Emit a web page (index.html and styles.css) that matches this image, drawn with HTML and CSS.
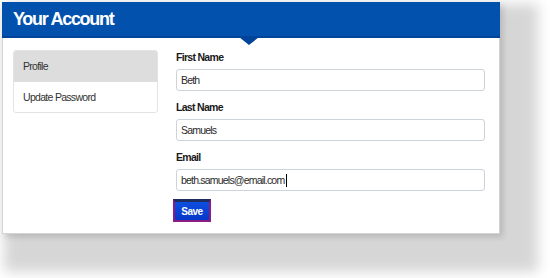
FILE: index.html
```html
<!DOCTYPE html>
<html lang="en">
<head>
    <meta charset="UTF-8">
    <meta name="viewport" content="width=device-width, initial-scale=1.0">
    <title>Your Account</title>
    <link rel="stylesheet" href="styles.css">
</head>
<body>
    <div class="account">
        <div class="account-header">
            <h1 class="title">Your Account</h1>
        </div>

        <div class="account-body">
            <ul class="side-nav">
                <li class="side-item active">Profile</li>
                <li class="side-item">Update Password</li>
            </ul>

            <form class="profile-form">
                <div class="form-group">
                    <label>First Name</label>
                    <div class="field">Beth</div>
                </div>

                <div class="form-group">
                    <label>Last Name</label>
                    <div class="field">Samuels</div>
                </div>

                <div class="form-group">
                    <label>Email</label>
                    <div class="field">beth.samuels@email.com<span class="caret"></span></div>
                </div>

                <button type="button" class="save-btn">Save</button>
            </form>
        </div>
    </div>
</body>
</html>
```

FILE: styles.css
```css
:root {
    --primary-color: #0251ad;
    --primary-dark: #00449a;
    --border-color: #d4d4d4;
    --text-color: #1c1c1c;
    --white: #ffffff;
}

* {
    margin: 0;
    padding: 0;
    box-sizing: border-box;
    font-family: "Liberation Sans", Arial, sans-serif;
}

body {
    background-color: var(--white);
    color: var(--text-color);
    min-height: 100vh;
    padding: 2px;
}

.account {
    width: 498px;
    height: 232px;
    background-color: var(--white);
    border: 1px solid var(--border-color);
    border-top: none;
    box-shadow: 3px 3px 6px rgba(0, 0, 0, 0.14), 20px 20px 12px 18px rgba(0, 0, 0, 0.16);
}

.account-header {
    position: relative;
    height: 36px;
    margin: 0 -1px;
    padding-left: 11px;
    background-color: var(--primary-color);
    border-bottom: 2px solid var(--primary-dark);
    display: flex;
    align-items: center;
}

/* little pointer under the header */
.account-header::after {
    content: "";
    position: absolute;
    left: 237px;
    bottom: -9px;
    border-left: 10px solid transparent;
    border-right: 10px solid transparent;
    border-top: 8px solid var(--primary-dark);
}

.title {
    color: var(--white);
    font-size: 18px;
    font-weight: bold;
    letter-spacing: -1.3px;
}

.account-body {
    display: flex;
    gap: 18px;
    padding: 12px 14px 0 10px;
}

.side-nav {
    list-style: none;
    width: 145px;
    align-self: flex-start;
    border: 1px solid #e3e3e3;
    border-radius: 3px;
    overflow: hidden;
}

.side-item {
    height: 30px;
    line-height: 30px;
    padding-left: 9px;
    font-size: 10.5px;
    letter-spacing: -0.7px;
    color: #333;
}

.side-item.active {
    background-color: #dddddd;
    height: 31px;
}

.profile-form {
    flex: 1;
    display: flex;
    flex-direction: column;
}

.form-group {
    margin-bottom: 9px;
}

label {
    display: block;
    height: 14px;
    line-height: 14px;
    margin-bottom: 5px;
    font-size: 10.5px;
    font-weight: bold;
    letter-spacing: -0.7px;
    color: #1a1a1a;
}

.field {
    height: 22px;
    line-height: 20px;
    padding-left: 4px;
    border: 1px solid #ccd3db;
    border-radius: 3px;
    font-size: 10.5px;
    letter-spacing: -0.8px;
    color: #2a2a2a;
    background-color: var(--white);
}

.caret {
    display: inline-block;
    width: 1px;
    height: 13px;
    margin-left: 2px;
    vertical-align: -3px;
    background-color: #000;
}

.save-btn {
    align-self: flex-start;
    width: 38px;
    height: 23px;
    margin-left: -3px;
    margin-top: -1px;
    border: 2px solid #8c1c82;
    border-top: 3px solid #1c2d5e;
    background: linear-gradient(#0d4fe0, #0638c8);
    color: var(--white);
    font-size: 10px;
    font-weight: bold;
    letter-spacing: -0.5px;
    cursor: pointer;
}
```
